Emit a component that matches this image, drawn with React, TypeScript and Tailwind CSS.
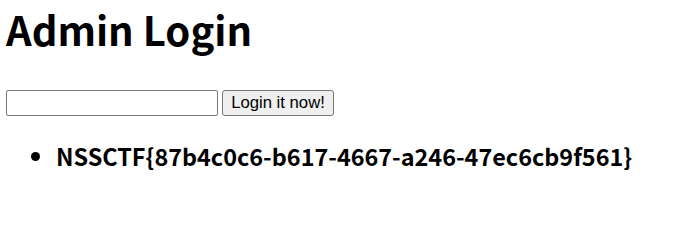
export default function App() {
  return (
    <div className="min-h-screen bg-white px-[6px] text-black">
      <h1 className="mt-[9px] font-['Noto_Sans_CJK_SC',sans-serif] text-[40px] font-bold leading-[40px]">
        Admin Login
      </h1>

      <form className="mt-[41px] flex items-center gap-[4px]" onSubmit={(e) => e.preventDefault()}>
        <input
          type="text"
          className="h-[26px] w-[212px] rounded-[2px] border border-[#767676] bg-white px-[3px] font-['Liberation_Sans',Arial,sans-serif] text-[16.7px] outline-none"
        />
        <button
          type="submit"
          className="h-[26px] w-[112px] rounded-[3px] border border-[#767676] bg-[#efefef] font-['Liberation_Sans',Arial,sans-serif] text-[16.7px] leading-none text-black"
        >
          Login it now!
        </button>
      </form>

      <ul className="mt-[28px] list-disc pl-[50px] font-['Noto_Sans_CJK_SC',sans-serif] text-[23.4px] font-bold leading-[24px]">
        <li>NSSCTF{"{"}87b4c0c6-b617-4667-a246-47ec6cb9f561{"}"}</li>
      </ul>
    </div>
  );
}
